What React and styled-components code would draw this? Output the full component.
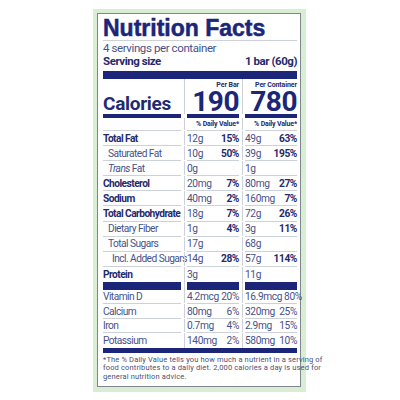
import React from "react";
import styled, { createGlobalStyle, css } from "styled-components";

const NAVY = "#1b2678";
const INK = "#1f2b6e";
const SOFT = "#46528a";
const RULE = "#cdd1d8";
const FONT = `Roboto, "Liberation Sans", Arial, sans-serif`;

const GlobalStyle = createGlobalStyle`
  body {
    margin: 0;
    background: #ffffff;
    font-family: ${FONT};
  }
`;

const Frame = styled.div`
  box-sizing: border-box;
  margin: 9px 0 0 93px;
  width: 213px;
  height: 383px;
  padding: 4px 5px 5px 4px;
  background: #d9edd5;
`;

const Label = styled.div`
  box-sizing: border-box;
  height: 100%;
  padding: 2px 3px 0 5px;
  display: flex;
  flex-direction: column;
  background: #ffffff;
  border: 1px solid #80868e;
`;

const Title = styled.h1`
  margin: 0;
  font-family: "Liberation Sans", Arial, sans-serif;
  font-size: 23px;
  line-height: 24px;
  font-weight: 700;
  color: ${NAVY};
  -webkit-text-stroke: 0.5px ${NAVY};
  border-bottom: 1px solid ${RULE};
`;

const Servings = styled.div`
  font-size: 11.5px;
  line-height: 14px;
  letter-spacing: -0.4px;
  color: ${SOFT};
`;

const ServingSize = styled.div`
  display: flex;
  justify-content: space-between;
  font-size: 11.5px;
  line-height: 13px;
  letter-spacing: -0.45px;
  font-weight: 700;
  color: ${INK};
`;

const Bar = styled.div`
  height: ${({ thick }) => thick}px;
  margin-top: ${({ top }) => top || 0}px;
  background: ${NAVY};
`;

const Table = styled.div`
  display: grid;
  grid-template-columns: 78px 52px 52px;
  column-gap: 6px;
`;

const Cell = styled.div`
  position: relative;
  display: flex;
  align-items: center;
  justify-content: space-between;
  gap: 2px;
  box-sizing: border-box;
  height: ${({ h }) => h}px;
  padding-left: ${({ indent }) => indent || 0}px;
  font-size: 10.2px;
  letter-spacing: -0.4px;
  color: ${SOFT};
  white-space: nowrap;
  border-bottom: ${({ ruled }) => (ruled ? `1px solid ${RULE}` : "none")};

  ${({ sep }) =>
    sep &&
    css`
      &::before {
        content: "";
        position: absolute;
        left: -3.5px;
        top: 0;
        bottom: 0;
        width: 1px;
        background: ${RULE};
      }
    `}
`;

const Name = styled.span`
  font-size: 10.2px;
  letter-spacing: -0.55px;
  font-weight: ${({ bold }) => (bold ? 700 : 400)};
  color: ${({ bold }) => (bold ? INK : SOFT)};
`;

const Pct = styled.span`
  font-weight: ${({ bold }) => (bold ? 700 : 400)};
  color: ${({ bold }) => (bold ? INK : SOFT)};
`;

const CalCell = styled(Cell)`
  flex-direction: column;
  align-items: stretch;
  justify-content: flex-end;
  gap: 0;
  border-bottom: 4px solid ${NAVY};
`;

const CalWord = styled.div`
  font-size: 19px;
  line-height: 20px;
  letter-spacing: -0.3px;
  font-weight: 700;
  color: ${INK};
`;

const PerLabel = styled.div`
  text-align: right;
  font-size: 7px;
  line-height: 8px;
  letter-spacing: -0.1px;
  margin-bottom: 1px;
  font-weight: 700;
  color: ${INK};
`;

const CalNum = styled.div`
  text-align: right;
  font-size: 28px;
  line-height: 24px;
  letter-spacing: -0.5px;
  font-weight: 700;
  color: ${NAVY};
`;

const DvHead = styled.span`
  margin-left: auto;
  font-size: 7px;
  letter-spacing: -0.15px;
  font-weight: 700;
  color: ${INK};
`;

const BarCell = styled(Cell)`
  background: ${NAVY};
`;

const Footnote = styled.p`
  margin: 3px 0 0;
  font-size: 7.5px;
  line-height: 8.5px;
  letter-spacing: 0.15px;
  white-space: nowrap;
  color: #4a5175;
`;

const nutrients = [
  { name: "Total Fat", bold: true, bar: ["12g", "15%"], box: ["49g", "63%"] },
  { name: "Saturated Fat", indent: 5, bar: ["10g", "50%"], box: ["39g", "195%"] },
  { name: "Trans Fat", italic: true, indent: 5, bar: ["0g"], box: ["1g"] },
  { name: "Cholesterol", bold: true, bar: ["20mg", "7%"], box: ["80mg", "27%"] },
  { name: "Sodium", bold: true, bar: ["40mg", "2%"], box: ["160mg", "7%"] },
  { name: "Total Carbohydrate", bold: true, bar: ["18g", "7%"], box: ["72g", "26%"] },
  { name: "Dietary Fiber", indent: 5, bar: ["1g", "4%"], box: ["3g", "11%"] },
  { name: "Total Sugars", indent: 5, bar: ["17g"], box: ["68g"] },
  { name: "Incl. Added Sugars", indent: 9, bar: ["14g", "28%"], box: ["57g", "114%"] },
  { name: "Protein", bold: true, bar: ["3g"], box: ["11g"] },
];

const minerals = [
  { name: "Vitamin D", bar: ["4.2mcg", "20%"], box: ["16.9mcg", "80%"] },
  { name: "Calcium", bar: ["80mg", "6%"], box: ["320mg", "25%"] },
  { name: "Iron", bar: ["0.7mg", "4%"], box: ["2.9mg", "15%"] },
  { name: "Potassium", bar: ["140mg", "2%"], box: ["580mg", "10%"] },
];

const Amount = ({ values, bold, h, ruled }) => (
  <Cell sep h={h} ruled={ruled}>
    <span>{values[0]}</span>
    {values[1] && <Pct bold={bold}>{values[1]}</Pct>}
  </Cell>
);

export default function App() {
  return (
    <>
      <GlobalStyle />
      <Frame>
        <Label>
          <Title>Nutrition Facts</Title>
          <Servings>4 servings per container</Servings>
          <ServingSize>
            <span>Serving size</span>
            <span>1 bar (60g)</span>
          </ServingSize>
          <Bar thick={8} top={3} />
          <Table>
            <CalCell h={39}>
              <CalWord>Calories</CalWord>
            </CalCell>
            <CalCell sep h={39}>
              <PerLabel>Per Bar</PerLabel>
              <CalNum>190</CalNum>
            </CalCell>
            <CalCell sep h={39}>
              <PerLabel>Per Container</PerLabel>
              <CalNum>780</CalNum>
            </CalCell>

            <Cell h={13} ruled />
            <Cell sep h={13} ruled>
              <DvHead>% Daily Value*</DvHead>
            </Cell>
            <Cell sep h={13} ruled>
              <DvHead>% Daily Value*</DvHead>
            </Cell>

            {nutrients.map((n) => (
              <React.Fragment key={n.name}>
                <Cell h={15.1} ruled={n.name !== "Protein"} indent={n.indent}>
                  <Name bold={n.bold}>
                    {n.italic ? (
                      <>
                        <i>Trans</i> Fat
                      </>
                    ) : (
                      n.name
                    )}
                  </Name>
                </Cell>
                <Amount values={n.bar} bold h={15.1} ruled={n.name !== "Protein"} />
                <Amount values={n.box} bold h={15.1} ruled={n.name !== "Protein"} />
              </React.Fragment>
            ))}

            <BarCell h={8} />
            <BarCell sep h={8} />
            <BarCell sep h={8} />

            {minerals.map((m, i) => {
              const ruled = i < minerals.length - 1;
              return (
                <React.Fragment key={m.name}>
                  <Cell h={14.5} ruled={ruled}>
                    <Name>{m.name}</Name>
                  </Cell>
                  <Amount values={m.bar} h={14.5} ruled={ruled} />
                  <Amount values={m.box} h={14.5} ruled={ruled} />
                </React.Fragment>
              );
            })}
          </Table>
          <Bar thick={5} />
          <Footnote>
            *The % Daily Value tells you how much a nutrient in a serving of
            <br />
            food contributes to a daily diet. 2,000 calories a day is used for
            <br />
            general nutrition advice.
          </Footnote>
        </Label>
      </Frame>
    </>
  );
}
